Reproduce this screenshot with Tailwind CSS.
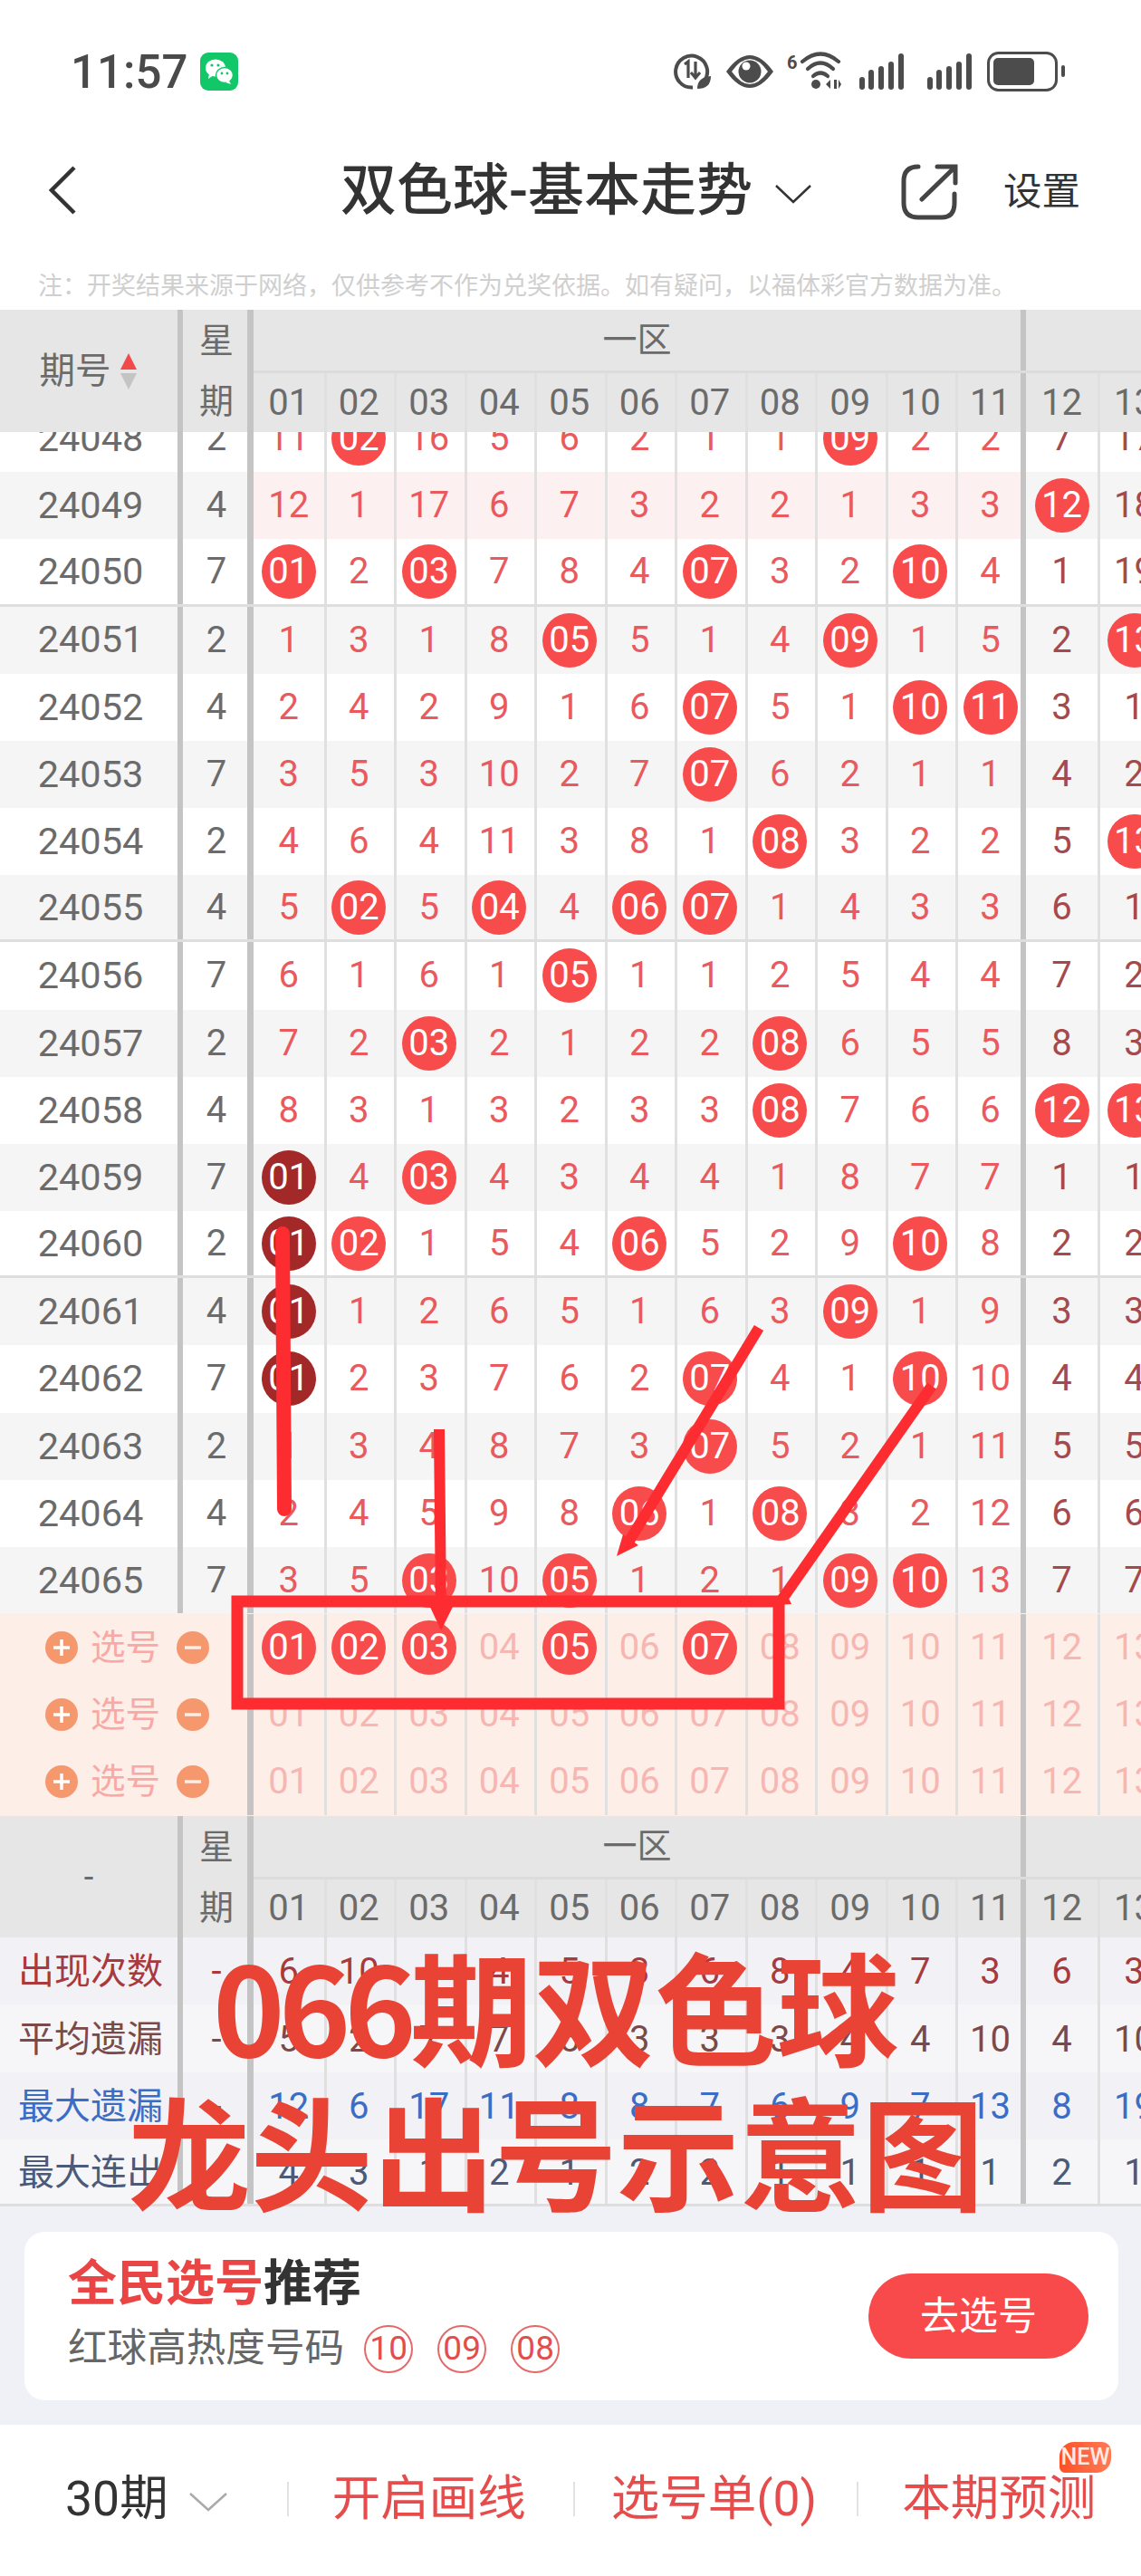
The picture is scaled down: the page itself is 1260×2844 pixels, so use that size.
<!DOCTYPE html>
<html lang="zh">
<head>
<meta charset="utf-8">
<script src="https://cdn.jsdelivr.net/npm/@tailwindcss/browser@4"></script>
</head>
<body class="m-0 bg-white">
<div class="relative w-[1260px] h-[2844px] overflow-hidden bg-white [font-family:Roboto,'Noto_Sans_CJK_SC',sans-serif]">

  <!-- status bar -->
  <div class="relative flex h-[158px] items-center pl-[78px] pr-[84px]">
    <span class="text-[51px] leading-none text-[#4a4a4a] font-medium">11:57</span>
    <svg class="ml-[14px]" width="42" height="42" viewBox="0 0 42 42">
      <rect width="42" height="42" rx="9" fill="#12c768"/>
      <ellipse cx="17" cy="17" rx="11" ry="9.5" fill="#fff"/>
      <path d="M10 23 L9 29 L15 25 Z" fill="#fff"/>
      <ellipse cx="27" cy="25" rx="9.5" ry="8.5" fill="#fff" stroke="#12c768" stroke-width="1.5"/>
      <path d="M32 31 L34 35 L28 33 Z" fill="#fff"/>
      <circle cx="13" cy="14" r="1.6" fill="#12c768"/><circle cx="20" cy="14" r="1.6" fill="#12c768"/>
      <circle cx="24" cy="23" r="1.4" fill="#12c768"/><circle cx="30" cy="23" r="1.4" fill="#12c768"/>
    </svg>
    <div class="ml-auto flex items-center">
      <svg width="432" height="46" viewBox="741 55 432 46" fill="#4c4c4c">
        <path d="M775 88 A17.5 17.5 0 1 0 762 95.5" fill="none" stroke="#4c4c4c" stroke-width="4"/>
        <path d="M753 70 l4 -3 v18 M765 67 v17 M760 79 l5 6 l5 -6" fill="none" stroke="#4c4c4c" stroke-width="3.2"/>
        <path d="M767 97 q0 -13 15 -14 q0 14 -15 14 Z"/>
        <path d="M799 78 Q825 42 851 78 Q825 114 799 78 Z M805 78 Q825 106 845 78 Q825 50 805 78 Z" fill-rule="evenodd"/>
        <circle cx="825" cy="78" r="12.5"/><circle cx="821" cy="72" r="4.5" fill="#fff"/>
        <text x="866" y="75" font-size="20" font-weight="700" font-family="Roboto">6</text>
        <g fill="none" stroke="#4c4c4c" stroke-width="4.2" stroke-linecap="round"><path d="M883 67 Q903 50 923 67"/><path d="M889 75 Q903 62 917 75"/><path d="M895 83 Q903 76 911 83"/></g>
        <circle cx="898" cy="92" r="5"/><path d="M909 92 l5 -5 v10 z M918 87 h3 v10 h-3 z M923 87 l0 10 l3 -5 z"/>
        <rect x="946" y="84" width="6" height="14" rx="3"/><rect x="956" y="76" width="6" height="22" rx="3"/><rect x="967" y="72" width="6" height="26" rx="3"/><rect x="978" y="67" width="6" height="31" rx="3"/><rect x="989" y="58" width="6" height="40" rx="3"/>
        <rect x="1021" y="84" width="6" height="14" rx="3"/><rect x="1031" y="76" width="6" height="22" rx="3"/><rect x="1042" y="72" width="6" height="26" rx="3"/><rect x="1053" y="67" width="6" height="31" rx="3"/><rect x="1064" y="58" width="6" height="40" rx="3"/>
        <rect x="1088.5" y="57.5" width="75" height="41" rx="11" fill="none" stroke="#4c4c4c" stroke-width="3"/>
        <rect x="1094" y="63" width="45" height="30" rx="5"/>
        <rect x="1169" y="71" width="4" height="13" rx="2"/>
      </svg>
    </div>
  </div>

  <!-- nav bar -->
  <div class="relative flex h-[104px] items-center">
    <svg class="ml-[54px]" width="30" height="54" viewBox="0 0 30 54"><path d="M28 2 L3 27 L28 52" fill="none" stroke="#333" stroke-width="4.5"/></svg>
    <div class="ml-[292px] pt-[2px] text-[62px] leading-none font-medium text-[#333] whitespace-nowrap">双色球-基本走势</div>
    <svg class="ml-[25px] mt-[8px] shrink-0" width="40" height="22" viewBox="0 0 40 22"><path d="M1 2 L20 20 L39 2" fill="none" stroke="#333" stroke-width="2.5"/></svg>
    <div class="absolute left-[994px] top-[22px] flex items-center">
      <svg width="64" height="64" viewBox="0 0 64 64"><path d="M20 4 Q4 4 4 20 V44 Q4 60 20 60 H46 Q60 60 60 44 V34" fill="none" stroke="#444" stroke-width="5" stroke-linecap="round"/><path d="M24 40 L60 5 M41 4 H61 V22" fill="none" stroke="#444" stroke-width="5" stroke-linecap="round"/></svg>
      <div class="ml-[50px] text-[42.5px] leading-none text-[#333] whitespace-nowrap">设置</div>
    </div>
  </div>

  <!-- note -->
  <div class="h-[80px] pt-[28px] pl-[42px] text-[27px] leading-[52px] text-[#cfcfcf] whitespace-nowrap">注：开奖结果来源于网络，仅供参考不作为兑奖依据。如有疑问，以福体彩官方数据为准。</div>

  <!-- table head -->
  <div id="head1"></div>
  <!-- scrolling rows -->
  <div class="h-[1304px] overflow-hidden"><div id="rows" class="-mt-[30px]"></div></div>
  <!-- pick rows -->
  <div id="picks" class="h-[224px] pt-[1px] bg-[#fdeee8]"></div>
  <!-- table head repeated -->
  <div id="head2"></div>
  <!-- stats -->
  <div id="stats" class="border-b-[3px] border-[#dedee0]"></div>

  <!-- recommendation -->
  <div class="h-[241px] bg-[#f0f1f6] pl-[27px] pr-[25px] pt-[28px]">
    <div class="flex h-[186px] items-center justify-between rounded-[22px] bg-white pl-[48px] pr-[33px]">
      <div class="flex flex-col">
        <div class="text-[54px] leading-[60px] font-bold -mt-[2px]"><span class="text-[#ea4545]">全民选号</span><span class="text-[#333]">推荐</span></div>
        <div class="mt-[14px] flex items-center">
          <span class="text-[43.6px] leading-[54px] text-[#666]">红球高热度号码</span>
          <span class="ml-[22px] flex h-[53px] w-[54px] items-center justify-center rounded-full border-2 border-[#e46a6a] text-[37px] text-[#e24e4e]">10</span>
          <span class="ml-[27px] flex h-[53px] w-[54px] items-center justify-center rounded-full border-2 border-[#e46a6a] text-[37px] text-[#e24e4e]">09</span>
          <span class="ml-[27px] flex h-[53px] w-[54px] items-center justify-center rounded-full border-2 border-[#e46a6a] text-[37px] text-[#e24e4e]">08</span>
        </div>
      </div>
      <div class="flex h-[94px] w-[243px] items-center justify-center rounded-full bg-[#f94a4b] text-[43px] text-white">去选号</div>
    </div>
  </div>

  <!-- bottom bar -->
  <div class="relative flex h-[167px] items-center pb-[3px] pl-[72px] whitespace-nowrap">
    <span class="text-[53.5px] leading-none text-[#333]">30期</span>
    <svg class="ml-[23px] mt-[6px] shrink-0" width="42" height="22" viewBox="0 0 42 22"><path d="M1 2 L21 20 L41 2" fill="none" stroke="#aaa" stroke-width="2.5"/></svg>
    <span class="ml-[66px] h-[38px] w-[2px] bg-[#e2e2e2]"></span>
    <span class="ml-[48px] text-[53.5px] leading-none text-[#e64c4c]">开启画线</span>
    <span class="ml-[52px] h-[38px] w-[2px] bg-[#e2e2e2]"></span>
    <span class="ml-[40px] text-[53.5px] leading-none text-[#e64c4c]">选号单(0)</span>
    <span class="ml-[44px] h-[38px] w-[2px] bg-[#e2e2e2]"></span>
    <span class="ml-[48px] text-[53.5px] leading-none text-[#e64c4c]">本期预测</span>
    <span class="absolute left-[1170px] top-[19px] flex h-[34px] w-[57px] items-center justify-center rounded-tl-[16px] rounded-tr-[10px] rounded-br-[16px] rounded-bl-[6px] bg-gradient-to-r from-[#ff4f22] to-[#ff7a55] text-[25px] font-medium text-[#ffe9e2]">NEW</span>
  </div>

  <!-- hand-drawn annotation on top of the screenshot -->
  <svg class="absolute left-0 top-0" width="1260" height="2844" viewBox="0 0 1260 2844">
    <g fill="none" stroke="#fd2c31" stroke-linecap="round">
      <path d="M312 1362 L314 1666" stroke-width="16"/>
      <path d="M485 1578 L487 1780" stroke-width="12" stroke-linecap="butt"/>
      <path d="M838 1466 L692 1706" stroke-width="12" stroke-linecap="butt"/>
      <path d="M1029 1530 L862 1768" stroke-width="12" stroke-linecap="butt"/>
      <rect x="262" y="1768" width="598" height="113" stroke-width="13" stroke-linejoin="miter" stroke-linecap="butt"/>
    </g>
    <g fill="#fd2c31">
      <path d="M474 1772 L501 1772 L487 1800 Z"/>
      <path d="M681 1718 L688 1694 L705 1706 Z"/>
      <path d="M855 1772 L866 1754 L874 1771 Z"/>
    </g>
  </svg>
  <div class="absolute left-0 top-[2132px] w-[1228px] text-center text-[135px] leading-[160px] font-bold text-[#e94335] whitespace-nowrap [font-family:'Noto_Sans_CJK_SC',sans-serif]"><span class="tracking-[-7px]">066</span>期双色球<br>龙头出号示意图</div>
</div>

<script>
  var R = [
    ['24048','2','11|2*|16|5|6|2|1|1|9*|2|2|7|17'],
    ['24049','4','12|1|17|6|7|3|2|2|1|3|3|12*|18'],
    ['24050','7','1*|2|3*|7|8|4|7*|3|2|10*|4|1|19'],
    ['24051','2','1|3|1|8|5*|5|1|4|9*|1|5|2|13*'],
    ['24052','4','2|4|2|9|1|6|7*|5|1|10*|11*|3|1'],
    ['24053','7','3|5|3|10|2|7|7*|6|2|1|1|4|2'],
    ['24054','2','4|6|4|11|3|8|1|8*|3|2|2|5|13*'],
    ['24055','4','5|2*|5|4*|4|6*|7*|1|4|3|3|6|1'],
    ['24056','7','6|1|6|1|5*|1|1|2|5|4|4|7|2'],
    ['24057','2','7|2|3*|2|1|2|2|8*|6|5|5|8|3'],
    ['24058','4','8|3|1|3|2|3|3|8*|7|6|6|12*|13*'],
    ['24059','7','1#|4|3*|4|3|4|4|1|8|7|7|1|1'],
    ['24060','2','1#|2*|1|5|4|6*|5|2|9|10*|8|2|2'],
    ['24061','4','1#|1|2|6|5|1|6|3|9*|1|9|3|3'],
    ['24062','7','1#|2|3|7|6|2|7*|4|1|10*|10|4|4'],
    ['24063','2','1|3|4|8|7|3|7*|5|2|1|11|5|5'],
    ['24064','4','2|4|5|9|8|6*|1|8*|3|2|12|6|6'],
    ['24065','7','3|5|3*|10|5*|1|2|1|9*|10*|13|7|7']
  ];
  var ALL = ['01','02','03','04','05','06','07','08','09','10','11','12','13'];
  function pad(n){ return n.length < 2 ? '0' + n : n; }
  function frame(k, inner, bg, extra){
    var cls = 'flex shrink-0 items-center justify-center text-[40px] leading-none ' + (bg || '') + ' ' + (extra || '');
    if (k === 0) cls += ' w-[77.5px]';
    else if (k < 10) cls += ' w-[77.5px] border-l-[3px] border-[#e0e0e0] pr-[3px]';
    else if (k === 10) cls += ' w-[78px] border-l-[3px] border-r-[6px] border-l-[#e0e0e0] border-r-[#c4c4c4] pl-[2px]';
    else if (k === 11) cls += ' w-[79px]';
    else cls += ' w-[81px] border-l-[3px] border-[#e0e0e0] pr-[3px]';
    return '<div class="' + cls + '">' + inner + '</div>';
  }
  function ball(t, dark){
    return '<span class="flex h-[60px] w-[60px] shrink-0 items-center justify-center rounded-full text-white ' + (dark ? 'bg-[#a32828]' : 'bg-[#f84b4b]') + '">' + t + '</span>';
  }
  function left(a, b, bg){
    return '<div class="flex w-[202px] shrink-0 items-center justify-center border-r-[6px] border-[#c4c4c4] pl-[4px] text-[41.5px] text-[#6b6b6b] ' + bg + '">' + a + '</div>' +
           '<div class="flex w-[78px] shrink-0 items-center justify-center border-r-[7px] border-[#c4c4c4] pl-[3px] text-[40px] text-[#6b6b6b] ' + bg + '">' + b + '</div>';
  }
  var html = '';
  R.forEach(function(r){
    var id = +r[0];
    var bg = id % 2 ? 'bg-[#f5f5f5]' : 'bg-white';
    var line = (id === 24050 || id === 24055 || id === 24060) ? ' border-b-[3px] border-[#dedede]' : '';
    var cells = r[2].split('|').map(function(v, k){
      var tone = k < 11 ? 'text-[#e9595d]' : 'text-[#a5494c]';
      var cb = (id === 24049 && k < 11) ? 'bg-[#fdf0f0]' : bg;
      if (v.slice(-1) === '*') return frame(k, ball(pad(v.slice(0, -1)), false), cb, tone);
      if (v.slice(-1) === '#') return frame(k, ball(pad(v.slice(0, -1)), true), cb, tone);
      return frame(k, v, cb, tone);
    }).join('');
    html += '<div class="flex h-[74.18px]' + line + '">' + left(r[0], r[1], bg) + cells + '</div>';
  });
  document.getElementById('rows').innerHTML = html;

  function pickLabel(){
    var plus = '<svg width="36" height="36" viewBox="0 0 36 36"><circle cx="18" cy="18" r="18" fill="#f5986e"/><path d="M9 18H27M18 9V27" stroke="#fff" stroke-width="3.5"/></svg>';
    var minus = '<svg width="36" height="36" viewBox="0 0 36 36"><circle cx="18" cy="18" r="18" fill="#f5986e"/><path d="M9 18H27" stroke="#fdeee8" stroke-width="3.5"/></svg>';
    return '<div class="flex w-[273px] shrink-0 items-center pl-[50px]">' + plus + '<span class="ml-[14px] mr-[18px] text-[38.5px] leading-none text-[#f8a9a6]">选号</span>' + minus + '</div><div class="w-[7px] shrink-0 bg-[#c4c4c4]"></div>';
  }
  var p = '';
  [ [0,1,2,4,6], [], [] ].forEach(function(sel){
    var cells = ALL.map(function(n, k){
      return sel.indexOf(k) >= 0 ? frame(k, ball(n, false), '', '') : frame(k, n, '', 'text-[#f8b6b2]');
    }).join('');
    p += '<div class="flex h-[74px]">' + pickLabel() + cells + '</div>';
  });
  document.getElementById('picks').innerHTML = p;

  var headHtml = function(label, h1cls){
    var nums = ALL.map(function(n, k){ return frame(k, n, '', 'text-[#6b6b6b]'); }).join('');
    return '<div class="flex bg-[#e6e6e6] ' + h1cls + '">' +
      '<div class="flex w-[202px] shrink-0 items-center justify-center border-r-[6px] border-[#c4c4c4] text-[#6b6b6b]">' + label + '</div>' +
      '<div class="flex w-[78px] shrink-0 flex-col items-center border-r-[7px] border-[#c4c4c4] pl-[3px] text-[38px] leading-none text-[#6b6b6b]"><div class="flex h-[68px] items-center">星</div><div class="flex h-[66px] items-center">期</div></div>' +
      '<div class="flex flex-1 flex-col">' +
        '<div class="flex h-[70px] border-b-[3px] border-[#dcdcdc]"><div class="flex w-[853px] shrink-0 items-center justify-center border-r-[6px] border-[#c4c4c4] text-[38px] text-[#6b6b6b]">一区</div></div>' +
        '<div class="flex flex-1 items-stretch">' + nums + '</div>' +
      '</div></div>';
  };
  document.getElementById('head1').innerHTML = headHtml('<span class="text-[39.5px] leading-none">期号</span><svg class="ml-[8px]" width="22" height="42" viewBox="0 0 22 42"><path d="M11 1 L20 19 H2 Z" fill="#f24a4a"/><path d="M11 41 L20 23 H2 Z" fill="#c4c4c4"/></svg>', 'h-[135px]');
  document.getElementById('head2').innerHTML = headHtml('<span class="text-[38px] leading-none">-</span>', 'h-[134px]');

  var S = [
    ['出现次数','6|10|4|4|5|3|6|8|4|7|3|6|3','text-[#a8393e]','bg-[#f2f2f6]','h-[74px]'],
    ['平均遗漏','5|2|7|7|5|3|3|3|4|4|10|4|10','text-[#7a4a4a]','bg-[#f6f6f8]','h-[75px]'],
    ['最大遗漏','12|6|17|11|8|8|7|6|9|7|13|8|19','text-[#3c6dc4]','bg-[#f2f2f6]','h-[74px]'],
    ['最大连出','4|3|1|2|1|2|2|1|1|1|1|2|1','text-[#4b5a78]','bg-[#f6f6f8]','h-[71px]']
  ];
  document.getElementById('stats').innerHTML = S.map(function(s){
    var cells = s[1].split('|').map(function(v, k){ return frame(k, v, '', s[2] + ' pt-[2px]'); }).join('');
    return '<div class="flex ' + s[4] + ' ' + s[3] + '">' +
      '<div class="flex w-[202px] shrink-0 items-center justify-center border-r-[6px] border-[#c4c4c4] pl-[4px] pt-[2px] text-[40px] leading-none ' + s[2] + '">' + s[0] + '</div>' +
      '<div class="flex w-[78px] shrink-0 items-center justify-center border-r-[7px] border-[#c4c4c4] pl-[3px] pt-[2px] text-[40px] ' + s[2] + '">-</div>' + cells + '</div>';
  }).join('');
</script>
</body>
</html>
